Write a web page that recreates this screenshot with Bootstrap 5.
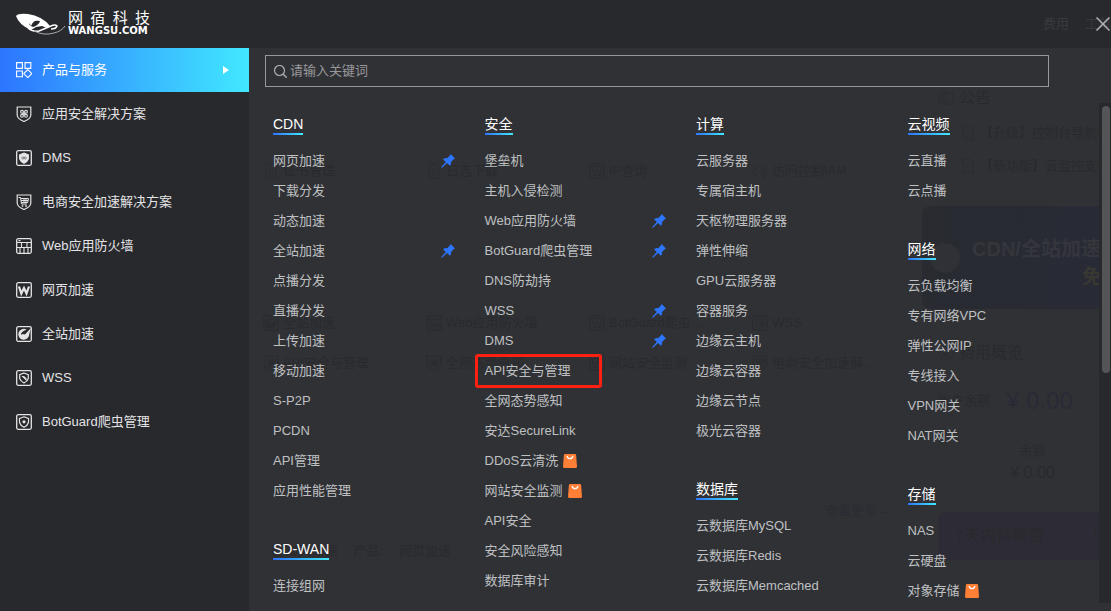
<!DOCTYPE html>
<html lang="zh-CN">
<head>
<meta charset="utf-8">
<meta name="viewport" content="width=device-width, initial-scale=1">
<title>网宿科技 - 产品与服务</title>
<link href="https://cdn.jsdelivr.net/npm/bootstrap@5.3.0/dist/css/bootstrap.min.css" rel="stylesheet">
<style>
body{font:13px/20px "Liberation Sans","Noto Sans CJK SC",sans-serif;background:#303135;color:#bfc0c2}
a{color:inherit;text-decoration:none}
ul{list-style:none;margin:0;padding:0}
svg{flex:none}
.ico{fill:none;stroke:currentColor}
/* sidebar */
.side{flex:0 0 249px;background:#28292d;color:#e4e4e6}
.brand{height:48px;padding-left:16px;gap:2px;color:#fff}
.brand-text{width:82px}
.brand-cn{font-size:15px;line-height:14px}
.brand-en{font:bold 10px/12px "DejaVu Sans",sans-serif}
.side-link{height:44px;padding:0 16px;gap:10px}
.side-link.active{background:linear-gradient(90deg,#2d75ff,#41e8ff);color:#fff}
/* page below the menu */
.under{inset:0;color:#292a2d}
.under .ico{opacity:.6}
.under-bar{height:48px;background:#28292d;color:#38393d}
.under-main{padding:103px 7px 0 14px}
.tile-row{height:40px}
.tile-row>*{flex:0 0 163px;gap:4px}
.tile-gap{margin-top:112px}
.more{margin-top:118px;padding-right:11px;color:#292c34}
.notice{flex:0 0 203px;padding-left:14px}
.h-under{font-size:16px;line-height:24px;gap:5px}
.notice-title{padding-top:38px;margin-bottom:6px}
.news{height:33px;padding-left:38px;gap:4px}
.promo{height:103px;border-radius:8px;background:linear-gradient(100deg,#292b31,#282a36);color:#34363c;font-weight:700;font-size:20px;line-height:28px}
.promo-text{padding-top:10px}
.promo-dot{width:30px;height:30px;background:#2f3136;margin:0 12px 0 8px}
.promo-gold{color:#393731;padding-left:110px}
.sum{font-size:24px;line-height:32px;color:#282b36}
.renew{height:48px;border-radius:8px;background:#2d2b35;font-size:16px;margin:27px 0 0 16px;padding-left:17px;gap:50px}
/* menu */
.top{flex:none;height:48px}
.close-btn{background:none;border:0;padding:0;color:#b4b4b6;line-height:0;margin-right:1px}
.search{flex:none;height:32px;margin:7px 62px 0 16px;border:1px solid #98989b;padding-left:8px;gap:3px}
.search-ico{color:#b0b0b2}
.search input{background:none;border:0;outline:0;padding:0;color:#ddd}
.search input::placeholder{color:#98989b;opacity:1}
.catalog{margin:16px 0 8px;min-height:0}
.cols{padding:10px 0 0 16px}
.cols>div{padding-left:8px}
.group{margin-bottom:32px}
.group h2{display:inline-block;vertical-align:top;height:22px;margin:0 0 11px;font-size:14px;line-height:22px;font-weight:400;color:#fff;background:linear-gradient(90deg,#2d75ff,#41e8ff) bottom/100% 2px no-repeat}
.group li{height:30px;padding-right:22px;gap:5px}
.pin{margin-left:auto;color:#2d75ff}
.marked::after{content:"";position:absolute;inset:-7px -32px -7px -10px;border:3px solid #ff2012;border-radius:3px}
.track{top:0;right:0;bottom:0;width:12px;background:#28292d}
.thumb{top:3px;left:3px;width:8px;height:267px;border-radius:4px;background:#555557}
</style>
</head>
<body>
<svg width="0" height="0" class="position-absolute" aria-hidden="true">
<defs>
<symbol id="i-frame" viewBox="0 0 16 16"><rect x=".7" y=".7" width="14.6" height="14.6" rx="1.5" stroke-width="1.3"/></symbol>
<symbol id="i-grid" viewBox="0 0 16 16"><path d="M.6.6h5.8v5.8H.6zM9 .6h5.8v5.8H9zM.6 9h5.8v5.8H.6zM11.8 7.6l4 4-4 4-4-4z" stroke-width="1.1"/></symbol>
<symbol id="i-shield" viewBox="0 0 16 16"><path d="M1.2 1h13.6v8.5Q14.300 13 8 15.500Q1.700 13 1.200 9.500z" stroke-width="1.200"/><g stroke-width="1.100"><circle cx="6" cy="5.800" r="1.400"/><circle cx="10" cy="5.800" r="1.400"/><circle cx="6" cy="9.800" r="1.400"/><circle cx="10" cy="9.800" r="1.400"/><path d="M6 7.800h4M8 5.800v4"/></g></symbol>
<symbol id="i-dms" viewBox="0 0 16 16"><use href="#i-frame"/><path d="M8 2.500l5 2v4.500q-1 3-5 5-4-2-5-5V4.500z" fill="currentColor" stroke="none"/><path d="M5.500 8l1.300-1.300L8 8l1.300-1.300L10.500 8 9.300 9.300 8 8 6.800 9.300z" stroke="#66676b" stroke-width=".8"/></symbol>
<symbol id="i-shop" viewBox="0 0 16 16"><path d="M1.200 1h13.600v8.500Q14.300 13 8 15.500Q1.700 13 1.200 9.500z" stroke-width="1.200"/><path d="M2.500 3.500h2L5.500 10h5.500M5 4.500h7.500l-.8 4H5.500M5 6.500h7M8 4.500v4M10 4.500v4" stroke-width="1"/><circle cx="6.500" cy="12" r=".6"/><circle cx="10" cy="12" r=".6"/></symbol>
<symbol id="i-wall" viewBox="0 0 16 16"><use href="#i-frame"/><path d="M1 4.500h14M1 9.500h14M5.500 4.500v5M11 4.500v5M4 9.500v5.500M8 9.500v5.500M12 9.500v5.500M2.500 2.600h2" stroke-width="1.100"/></symbol>
<symbol id="i-w" viewBox="0 0 16 16"><use href="#i-frame"/><path d="M3 4.500l2.300 7L8 6l2.500 5.500 2.500-7" stroke-width="2.200"/></symbol>
<symbol id="i-gauge" viewBox="0 0 16 16"><use href="#i-frame"/><path d="M10.500 3.500a5.500 5.500 0 1 0 2.800 4.500L15 2 9 8.500 6.500 8 5.500 9 5 7.500Q6.500 5 10.500 3.500z" fill="currentColor" stroke="none"/></symbol>
<symbol id="i-wss" viewBox="0 0 16 16"><use href="#i-frame"/><path d="M8 3l4.300 1.700V8.500q-.8 2.700-4.300 4.500-3.500-1.800-4.300-4.500V4.700z" stroke-width="1.200"/><path d="M5.500 6l5 5V8.300L8 6z" fill="currentColor" stroke="none"/></symbol>
<symbol id="i-bot" viewBox="0 0 16 16"><use href="#i-frame"/><path d="M8 2.800l4.500 1.700V8.500q-.8 2.900-4.500 4.700-3.700-1.800-4.500-4.700V4.500z" stroke-width="1.200"/><circle cx="8" cy="7.800" r="1.600" fill="currentColor" stroke="none"/></symbol>
<symbol id="i-pin" viewBox="0 0 14 14"><path d="M9.600 0l4.400 4.400-1.300.9-2.900 2.900.4 1.700-1.300 1.900-2.900-2.800L1 13.800 0 13.200l4.800-5.100L2 5.200l2.300-1.100 1.800.2 2.800-2.700z" fill="currentColor"/></symbol>
<symbol id="i-bag" viewBox="0 0 14 14"><path d="M2 0h10q1 0 1.100 1L14 12.500q0 1.500-1.500 1.500h-11Q0 14 0 12.500L.9 1Q1 0 2 0z" fill="#ff7f36"/><path d="M4.200 2.400q.5 2.300 2.800 2.300t2.800-2.300" fill="none" stroke="#fff" stroke-width="1.300" stroke-linecap="round"/></symbol>
<symbol id="i-doc" viewBox="0 0 16 16"><path d="M3 1h7l3 3v11H3zM5.500 6h5M5.500 9h5M5.500 12h3"/></symbol>
<symbol id="i-board" viewBox="0 0 16 16"><path d="M1 3h14v11H1zM5 3l3-2 3 2M3 6h5M3 8.500h8M3 11h9"/></symbol>
<symbol id="i-yen" viewBox="0 0 16 16"><circle cx="8" cy="8" r="7"/><path d="M5 4l3 3.500L11 4M8 7.500V12M5 8h6M5 10h6"/></symbol>
<symbol id="i-cloud" viewBox="0 0 16 16"><path d="M6 13H4a3.500 3.500 0 0 1-.5-6.500Q4 3 8 2.500q3 0 4 2.500"/><circle cx="12" cy="8" r="2.500"/><path d="M12 10.500V15h2"/></symbol>
</defs>
</svg>

<div class="d-flex vh-100 overflow-hidden">
  <nav class="side" aria-label="主导航">
    <a href="#" class="brand d-flex align-items-center">
      <svg width="50" height="24" viewBox="0 0 50 24" aria-hidden="true"><path fill="#fff" fill-rule="evenodd" d="M0 4Q2 1 12 2q14 2 22 12l-3 2-5-2-6 1-5 3Q3 13 0 4zM13 12q4-5 11-3-1 4-7 6-3-1-4-3z"/><path fill="none" stroke="#fff" stroke-width="1.500" d="M12 16q4 4 11 3l12-5q4-2 6 0-1 3-6 3"/><path fill="none" stroke="#aaa" d="M18 19q10 5 20 2 8-2 11-7"/><path fill="#fff" d="M12 9q6-5 11-1-6 0-8 6z"/></svg>
      <span class="brand-text">
        <span class="brand-cn d-flex justify-content-between"><span>网</span><span>宿</span><span>科</span><span>技</span></span>
        <span class="brand-en d-block">WANGSU.COM</span>
      </span>
    </a>
    <a href="#" class="side-link active d-flex align-items-center"><svg class="ico" width="16" height="16"><use href="#i-grid"/></svg>产品与服务<svg class="ms-auto me-1" width="6" height="8"><path d="M0 0l6 4-6 4z" fill="#fff"/></svg></a>
    <a href="#" class="side-link d-flex align-items-center"><svg class="ico" width="16" height="16"><use href="#i-shield"/></svg>应用安全解决方案</a>
    <a href="#" class="side-link d-flex align-items-center"><svg class="ico" width="16" height="16"><use href="#i-dms"/></svg>DMS</a>
    <a href="#" class="side-link d-flex align-items-center"><svg class="ico" width="16" height="16"><use href="#i-shop"/></svg>电商安全加速解决方案</a>
    <a href="#" class="side-link d-flex align-items-center"><svg class="ico" width="16" height="16"><use href="#i-wall"/></svg>Web应用防火墙</a>
    <a href="#" class="side-link d-flex align-items-center"><svg class="ico" width="16" height="16"><use href="#i-w"/></svg>网页加速</a>
    <a href="#" class="side-link d-flex align-items-center"><svg class="ico" width="16" height="16"><use href="#i-gauge"/></svg>全站加速</a>
    <a href="#" class="side-link d-flex align-items-center"><svg class="ico" width="16" height="16"><use href="#i-wss"/></svg>WSS</a>
    <a href="#" class="side-link d-flex align-items-center"><svg class="ico" width="16" height="16"><use href="#i-bot"/></svg>BotGuard爬虫管理</a>
  </nav>

  <div class="flex-fill position-relative overflow-hidden">
    <!-- console home page, dimmed below the open menu -->
    <div class="under position-absolute overflow-hidden" aria-hidden="true">
      <div class="under-bar d-flex align-items-center justify-content-end"><span class="me-3">费用</span><span>工单</span></div>
      <div class="d-flex">
        <div class="under-main flex-fill overflow-hidden">
          <div class="tile-row d-flex align-items-center">
            <span class="d-flex align-items-center"><svg class="ico" width="16" height="16"><use href="#i-doc"/></svg>证书管理</span>
            <span class="d-flex align-items-center"><svg class="ico" width="16" height="16"><use href="#i-doc"/></svg>日志下载</span>
            <span class="d-flex align-items-center"><svg class="ico" width="16" height="16"><use href="#i-bot"/></svg>IP查询</span>
            <span class="d-flex align-items-center"><svg class="ico" width="16" height="16"><use href="#i-cloud"/></svg>访问控制IAM</span>
          </div>
          <div class="tile-row tile-gap d-flex align-items-center">
            <span class="d-flex align-items-center"><svg class="ico" width="16" height="16"><use href="#i-gauge"/></svg>全站加速</span>
            <span class="d-flex align-items-center"><svg class="ico" width="16" height="16"><use href="#i-wall"/></svg>Web应用防火墙</span>
            <span class="d-flex align-items-center"><svg class="ico" width="16" height="16"><use href="#i-bot"/></svg>BotGuard爬虫…</span>
            <span class="d-flex align-items-center"><svg class="ico" width="16" height="16"><use href="#i-wss"/></svg>WSS</span>
          </div>
          <div class="tile-row d-flex align-items-center">
            <span class="d-flex align-items-center"><svg class="ico" width="16" height="16"><use href="#i-shield"/></svg>API安全与管理</span>
            <span class="d-flex align-items-center"><svg class="ico" width="16" height="16"><use href="#i-shield"/></svg>全网态势感知</span>
            <span class="d-flex align-items-center"><svg class="ico" width="16" height="16"><use href="#i-bot"/></svg>网站安全监测</span>
            <span class="d-flex align-items-center"><svg class="ico" width="16" height="16"><use href="#i-shop"/></svg>电商安全加速解…</span>
          </div>
          <div class="more text-end">查看更多→</div>
          <div class="d-flex pt-3 gap-3 mt-1 ps-2"><span>近30天数据</span><span>产品:</span><span>网页加速</span></div>
        </div>
        <div class="notice overflow-hidden text-nowrap">
          <div class="h-under notice-title d-flex align-items-center ps-3"><svg class="ico" width="16" height="16"><use href="#i-board"/></svg>公告</div>
          <div class="news d-flex align-items-center"><svg class="ico" width="16" height="16"><use href="#i-doc"/></svg>【升级】控制台导航栏</div>
          <div class="news d-flex align-items-center"><svg class="ico" width="16" height="16"><use href="#i-doc"/></svg>【新功能】云监控支持</div>
          <div class="promo mt-4 d-flex align-items-center"><span class="promo-dot rounded-circle flex-shrink-0 d-flex align-items-center justify-content-center"><svg class="ico" width="8" height="12"><path d="M7 1L2 6l5 5"/></svg></span><span class="promo-text">CDN/全站加速<br><span class="promo-gold">免费</span></span></div>
          <div class="h-under d-flex align-items-center ps-3 pt-3 mt-3"><svg class="ico" width="16" height="16"><use href="#i-yen"/></svg>费用概览</div>
          <div class="d-flex align-items-center ps-3 gap-3 pt-3 mt-1"><span>账户余额</span><span class="sum">¥ 0.00</span></div>
          <div class="text-center pt-3 ps-5 mt-2 me-3 pe-0">余额</div>
          <div class="h-under text-center ps-5 me-3">¥ 0.00</div>
          <div class="renew d-flex align-items-center"><span>7天内待续费</span><span>0</span></div>
        </div>
      </div>
    </div>

    <!-- product menu -->
    <div class="position-relative d-flex flex-column h-100">
      <div class="top d-flex align-items-center justify-content-end"><button type="button" class="close-btn" aria-label="关闭"><svg class="ico" width="14" height="14"><path d="M.5.5l13 13M13.500.5l-13 13" stroke-width="1.500"/></svg></button></div>
      <div class="search d-flex align-items-center">
        <svg class="ico search-ico" width="13" height="13"><circle cx="5.500" cy="5.500" r="5" stroke-width="1.200"/><path d="M9.200 9.200l3.500 3.500" stroke-width="1.300"/></svg>
        <input type="text" class="flex-fill" placeholder="请输入关键词" aria-label="请输入关键词">
      </div>
      <div class="catalog flex-fill position-relative overflow-hidden">
        <div class="cols row g-0">
          <div class="col-3">
            <section class="group"><h2>CDN</h2>
              <ul>
                <li class="d-flex align-items-center"><a href="#">网页加速</a><svg class="pin" width="14" height="14"><use href="#i-pin"/></svg></li>
                <li class="d-flex align-items-center"><a href="#">下载分发</a></li>
                <li class="d-flex align-items-center"><a href="#">动态加速</a></li>
                <li class="d-flex align-items-center"><a href="#">全站加速</a><svg class="pin" width="14" height="14"><use href="#i-pin"/></svg></li>
                <li class="d-flex align-items-center"><a href="#">点播分发</a></li>
                <li class="d-flex align-items-center"><a href="#">直播分发</a></li>
                <li class="d-flex align-items-center"><a href="#">上传加速</a></li>
                <li class="d-flex align-items-center"><a href="#">移动加速</a></li>
                <li class="d-flex align-items-center"><a href="#">S-P2P</a></li>
                <li class="d-flex align-items-center"><a href="#">PCDN</a></li>
                <li class="d-flex align-items-center"><a href="#">API管理</a></li>
                <li class="d-flex align-items-center"><a href="#">应用性能管理</a></li>
              </ul>
            </section>
            <section class="group"><h2>SD-WAN</h2>
              <ul><li class="d-flex align-items-center"><a href="#">连接组网</a></li></ul>
            </section>
          </div>
          <div class="col-3">
            <section class="group"><h2>安全</h2>
              <ul>
                <li class="d-flex align-items-center"><a href="#">堡垒机</a></li>
                <li class="d-flex align-items-center"><a href="#">主机入侵检测</a></li>
                <li class="d-flex align-items-center"><a href="#">Web应用防火墙</a><svg class="pin" width="14" height="14"><use href="#i-pin"/></svg></li>
                <li class="d-flex align-items-center"><a href="#">BotGuard爬虫管理</a><svg class="pin" width="14" height="14"><use href="#i-pin"/></svg></li>
                <li class="d-flex align-items-center"><a href="#">DNS防劫持</a></li>
                <li class="d-flex align-items-center"><a href="#">WSS</a><svg class="pin" width="14" height="14"><use href="#i-pin"/></svg></li>
                <li class="d-flex align-items-center"><a href="#">DMS</a><svg class="pin" width="14" height="14"><use href="#i-pin"/></svg></li>
                <li class="d-flex align-items-center"><a href="#" class="marked position-relative">API安全与管理</a></li>
                <li class="d-flex align-items-center"><a href="#">全网态势感知</a></li>
                <li class="d-flex align-items-center"><a href="#">安达SecureLink</a></li>
                <li class="d-flex align-items-center"><a href="#">DDoS云清洗</a><svg width="14" height="14"><use href="#i-bag"/></svg></li>
                <li class="d-flex align-items-center"><a href="#">网站安全监测</a><svg width="14" height="14"><use href="#i-bag"/></svg></li>
                <li class="d-flex align-items-center"><a href="#">API安全</a></li>
                <li class="d-flex align-items-center"><a href="#">安全风险感知</a></li>
                <li class="d-flex align-items-center"><a href="#">数据库审计</a></li>
              </ul>
            </section>
          </div>
          <div class="col-3">
            <section class="group"><h2>计算</h2>
              <ul>
                <li class="d-flex align-items-center"><a href="#">云服务器</a></li>
                <li class="d-flex align-items-center"><a href="#">专属宿主机</a></li>
                <li class="d-flex align-items-center"><a href="#">天枢物理服务器</a></li>
                <li class="d-flex align-items-center"><a href="#">弹性伸缩</a></li>
                <li class="d-flex align-items-center"><a href="#">GPU云服务器</a></li>
                <li class="d-flex align-items-center"><a href="#">容器服务</a></li>
                <li class="d-flex align-items-center"><a href="#">边缘云主机</a></li>
                <li class="d-flex align-items-center"><a href="#">边缘云容器</a></li>
                <li class="d-flex align-items-center"><a href="#">边缘云节点</a></li>
                <li class="d-flex align-items-center"><a href="#">极光云容器</a></li>
              </ul>
            </section>
            <section class="group"><h2>数据库</h2>
              <ul>
                <li class="d-flex align-items-center"><a href="#">云数据库MySQL</a></li>
                <li class="d-flex align-items-center"><a href="#">云数据库Redis</a></li>
                <li class="d-flex align-items-center"><a href="#">云数据库Memcached</a></li>
              </ul>
            </section>
          </div>
          <div class="col-3">
            <section class="group"><h2>云视频</h2>
              <ul>
                <li class="d-flex align-items-center"><a href="#">云直播</a></li>
                <li class="d-flex align-items-center"><a href="#">云点播</a></li>
              </ul>
            </section>
            <section class="group"><h2>网络</h2>
              <ul>
                <li class="d-flex align-items-center"><a href="#">云负载均衡</a></li>
                <li class="d-flex align-items-center"><a href="#">专有网络VPC</a></li>
                <li class="d-flex align-items-center"><a href="#">弹性公网IP</a></li>
                <li class="d-flex align-items-center"><a href="#">专线接入</a></li>
                <li class="d-flex align-items-center"><a href="#">VPN网关</a></li>
                <li class="d-flex align-items-center"><a href="#">NAT网关</a></li>
              </ul>
            </section>
            <section class="group"><h2>存储</h2>
              <ul>
                <li class="d-flex align-items-center"><a href="#">NAS</a></li>
                <li class="d-flex align-items-center"><a href="#">云硬盘</a></li>
                <li class="d-flex align-items-center"><a href="#">对象存储</a><svg width="14" height="14"><use href="#i-bag"/></svg></li>
              </ul>
            </section>
          </div>
        </div>
        <div class="track position-absolute"><div class="thumb position-absolute"></div></div>
      </div>
    </div>
  </div>
</div>
<script src="https://cdn.jsdelivr.net/npm/bootstrap@5.3.0/dist/js/bootstrap.bundle.min.js"></script>
</body>
</html>
